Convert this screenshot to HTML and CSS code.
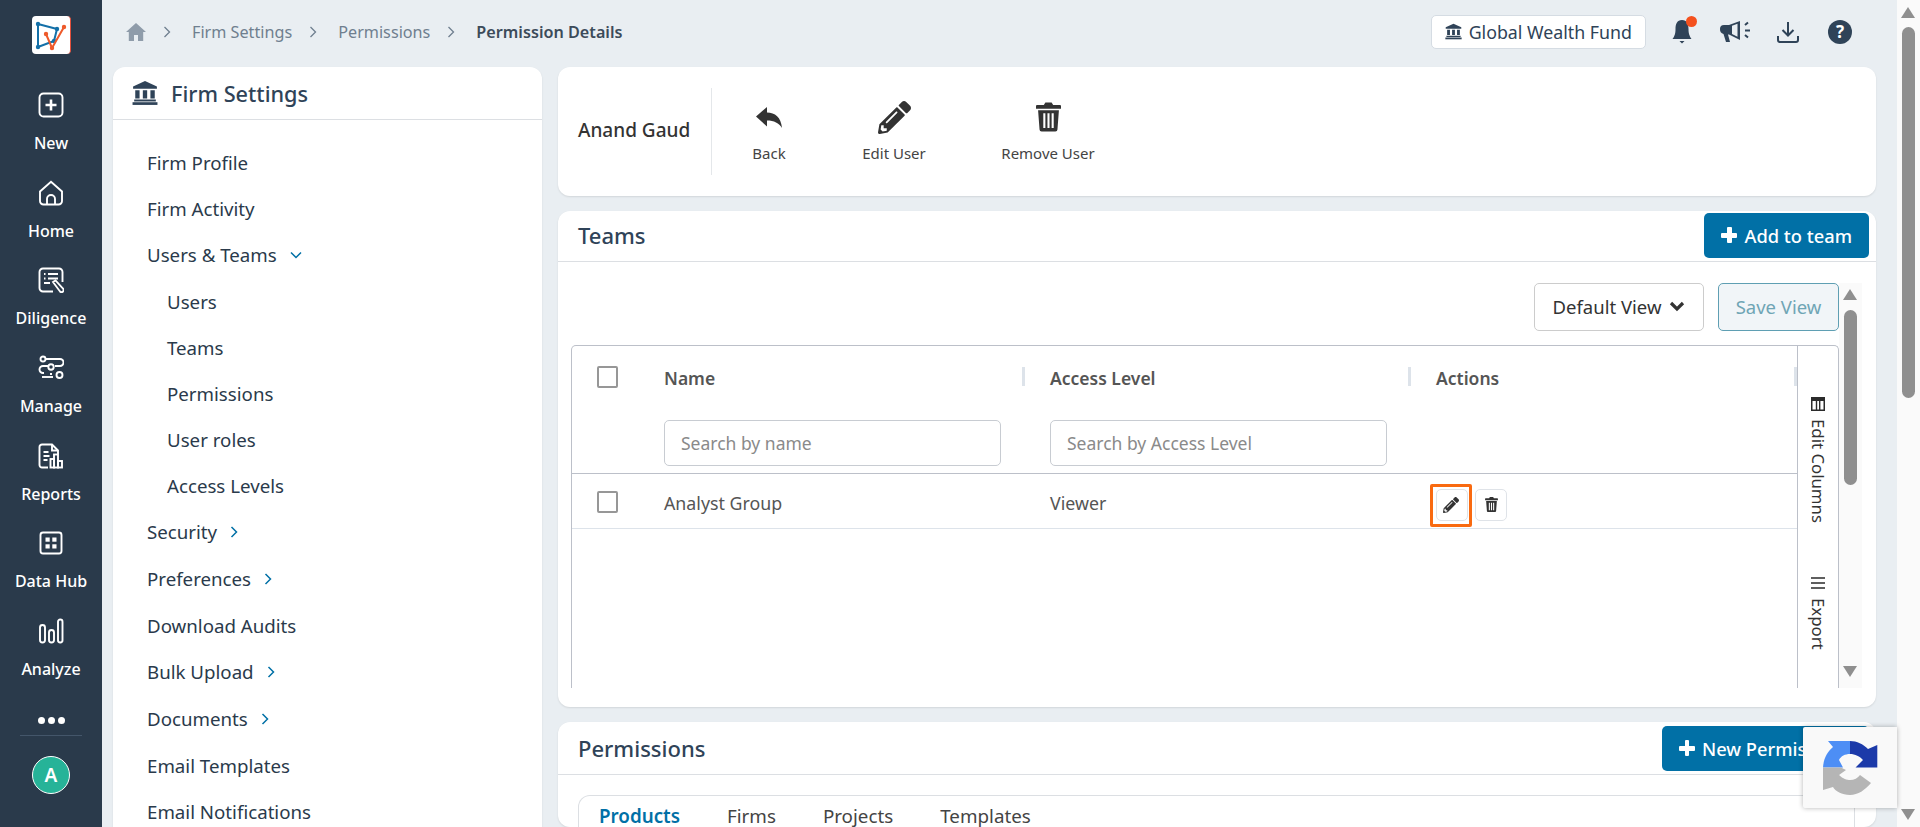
FILE: index.html
```html
<!DOCTYPE html>
<html lang="en">
<head>
    <meta charset="UTF-8">
    <meta name="viewport" content="width=device-width, initial-scale=1.0">
    <title>Permission Details</title>
    <link rel="stylesheet" href="styles.css">
</head>
<body>

    <!-- Left app rail -->
    <aside class="rail">
        <div class="logo">
            <svg viewBox="0 0 38 38" width="38" height="38">
                <path d="M6 8 L25 13 L22 25 L6 31 Z" fill="none" stroke="#1470a8" stroke-width="2"/>
                <circle cx="6" cy="8" r="2.2" fill="#1470a8"/><circle cx="25" cy="13" r="2.2" fill="#1470a8"/>
                <circle cx="22" cy="25" r="2.2" fill="#1470a8"/><circle cx="6" cy="31" r="2.2" fill="#1470a8"/>
                <path d="M14 18 L20 32 L32 11" fill="none" stroke="#ee5a2b" stroke-width="2"/>
                <circle cx="14" cy="18" r="2.2" fill="#ee5a2b"/><circle cx="20" cy="32" r="2.2" fill="#ee5a2b"/><circle cx="32" cy="11" r="2.2" fill="#ee5a2b"/>
            </svg>
        </div>
        <nav class="rail-nav">
            <a class="rail-item">
                <svg viewBox="0 0 26 26" class="rail-icon"><rect x="1.5" y="1.5" width="23" height="23" rx="4"/><path d="M13 7.5v11M7.5 13h11" stroke-width="2.6"/></svg>
                <span>New</span>
            </a>
            <a class="rail-item">
                <svg viewBox="0 0 26 26" class="rail-icon"><path d="M2 11.5 L13 1.8 L24 11.5 V21 a3.5 3.5 0 0 1 -3.5 3.5 H5.5 A3.5 3.5 0 0 1 2 21 Z"/><path d="M9 24.5 V19 a4 4 0 0 1 8 0 V24.5"/></svg>
                <span>Home</span>
            </a>
            <a class="rail-item">
                <svg viewBox="0 0 26 26" class="rail-icon"><path d="M15 24.5 H5 a3.5 3.5 0 0 1 -3.5 -3.5 V5 A3.5 3.5 0 0 1 5 1.5 H21 A3.5 3.5 0 0 1 24.5 5 V15"/><path d="M6 7h1.5M10 7h10M6 11.5h1.5M10 11.5h10M6 16h6"/><path d="M15 15 l2.500 -1.500 l7.500 8 a2 2 0 0 1 -3 3 z" stroke-width="1.800"/></svg>
                <span>Diligence</span>
            </a>
            <a class="rail-item">
                <svg viewBox="0 0 26 26" class="rail-icon"><circle cx="5" cy="4" r="2.500"/><path d="M8 4h14a2.500 2.500 0 0 1 0 7h-5"/><circle cx="13" cy="12" r="2.700"/><path d="M10 11H5a3.500 3.500 0 0 0 0 7h1M12 19h2"/><circle cx="21.500" cy="20" r="3"/><path d="M4 22h11"/></svg>
                <span>Manage</span>
            </a>
            <a class="rail-item">
                <svg viewBox="0 0 26 26" class="rail-icon"><path d="M10 24.500H4a2.500 2.500 0 0 1 -2.500 -2.500V4A2.500 2.500 0 0 1 4 1.500H14L20 7.500V11"/><path d="M14 1.500V7.500H20"/><path d="M5.500 9h5M5.500 13h6M5.500 17h4"/><rect x="12.500" y="16" width="3.500" height="8.500"/><rect x="16" y="11.500" width="4" height="13"/><rect x="20" y="18" width="4" height="6.500"/></svg>
                <span>Reports</span>
            </a>
            <a class="rail-item">
                <svg viewBox="0 0 26 26" class="rail-icon"><rect x="2.500" y="2.500" width="21" height="21" rx="2.500"/><g class="rail-fill"><rect x="7.500" y="7.500" width="4.200" height="4.200"/><rect x="14.300" y="7.500" width="4.200" height="4.200"/><rect x="7.500" y="14.300" width="4.200" height="4.200"/><rect x="14.300" y="14.300" width="4.200" height="4.200"/></g></svg>
                <span>Data Hub</span>
            </a>
            <a class="rail-item">
                <svg viewBox="0 0 26 26" class="rail-icon"><rect x="2" y="7" width="5" height="17.500" rx="2.500"/><rect x="11" y="12" width="5" height="12.500" rx="2.500"/><rect x="20" y="1.500" width="4.500" height="23" rx="2.200"/></svg>
                <span>Analyze</span>
            </a>
        </nav>
        <div class="rail-more"><i></i><i></i><i></i></div>
        <div class="rail-line"></div>
        <div class="avatar">A</div>
    </aside>

    <main class="main">

        <!-- Breadcrumbs and top tools -->
        <header class="topbar">
            <div class="crumbs">
                <svg class="crumb-home" viewBox="0 0 20 18" width="20" height="18"><path d="M10 0 L20 9 L17.200 9 V18 H12 V12 H8 V18 H2.800 V9 H0 Z" fill="#8f9caa"/></svg>
                <svg class="crumb-sep" viewBox="0 0 8 12" width="8" height="12"><path d="M1.500 1 L6.500 6 L1.500 11" fill="none" stroke="#6f7f8f" stroke-width="1.300"/></svg>
                <span>Firm Settings</span>
                <svg class="crumb-sep" viewBox="0 0 8 12" width="8" height="12"><path d="M1.500 1 L6.500 6 L1.500 11" fill="none" stroke="#6f7f8f" stroke-width="1.300"/></svg>
                <span>Permissions</span>
                <svg class="crumb-sep" viewBox="0 0 8 12" width="8" height="12"><path d="M1.500 1 L6.500 6 L1.500 11" fill="none" stroke="#6f7f8f" stroke-width="1.300"/></svg>
                <strong>Permission Details</strong>
            </div>
            <div class="tools">
                <div class="firm-pill">
                    <svg viewBox="0 0 24 24" width="17" height="17"><use href="#bank"/></svg>
                    <span>Global Wealth Fund</span>
                </div>
                <div class="tool tool-bell">
                    <svg viewBox="0 0 20 26" width="20" height="26"><path d="M10 1 C5 1 3.500 5 3.500 10 C3.500 15 2.500 17 0.500 20 H19.500 C17.500 17 16.500 15 16.500 10 C16.500 5 15 1 10 1 Z M7.500 22 H12.500 L10 24.500 Z" fill="#2f4358"/></svg>
                    <i class="bell-dot"></i>
                </div>
                <svg class="tool tool-horn" viewBox="0 0 33 24" width="33" height="24"><path d="M1 9 a4 4 0 0 1 4 -4 H10 L21 1 V20 L10 14.500 H9 L11 22 H7 L4.500 14 A5 5 0 0 1 1 9 Z" fill="#2f4358"/><path d="M13 5.800 L18.500 3.800 V16.800 L13 14 Z" fill="#e9eef2"/><path d="M26 5 l3 -2.500 M26 10.500 h5 M26 15 l3 2.500" stroke="#2f4358" stroke-width="2" fill="none"/></svg>
                <svg class="tool tool-down" viewBox="0 0 22 22" width="22" height="22"><path d="M11 1 V14 M5.500 9 L11 14.500 L16.500 9 M1 15 V19 a2 2 0 0 0 2 2 H19 a2 2 0 0 0 2 -2 V15" fill="none" stroke="#2f4358" stroke-width="2"/></svg>
                <div class="tool-help">?</div>
            </div>
        </header>

        <div class="columns">

            <!-- Settings menu -->
            <section class="card side-card">
                <div class="side-head">
                    <svg viewBox="0 0 24 24" width="26" height="26"><use href="#bank"/></svg>
                    <h2>Firm Settings</h2>
                </div>
                <ul class="side-list">
                    <li>Firm Profile</li>
                    <li>Firm Activity</li>
                    <li class="has-arrow">Users &amp; Teams <svg viewBox="0 0 12 8" width="12" height="8"><path d="M1 1.500 L6 6.500 L11 1.500" fill="none" stroke="#0170a6" stroke-width="1.500"/></svg></li>
                    <li class="sub">Users</li>
                    <li class="sub">Teams</li>
                    <li class="sub">Permissions</li>
                    <li class="sub">User roles</li>
                    <li class="sub">Access Levels</li>
                    <li class="has-arrow">Security <svg viewBox="0 0 8 12" width="8" height="12"><path d="M1.500 1 L6.500 6 L1.500 11" fill="none" stroke="#0170a6" stroke-width="1.500"/></svg></li>
                    <li class="has-arrow">Preferences <svg viewBox="0 0 8 12" width="8" height="12"><path d="M1.500 1 L6.500 6 L1.500 11" fill="none" stroke="#0170a6" stroke-width="1.500"/></svg></li>
                    <li>Download Audits</li>
                    <li class="has-arrow">Bulk Upload <svg viewBox="0 0 8 12" width="8" height="12"><path d="M1.500 1 L6.500 6 L1.500 11" fill="none" stroke="#0170a6" stroke-width="1.500"/></svg></li>
                    <li class="has-arrow">Documents <svg viewBox="0 0 8 12" width="8" height="12"><path d="M1.500 1 L6.500 6 L1.500 11" fill="none" stroke="#0170a6" stroke-width="1.500"/></svg></li>
                    <li>Email Templates</li>
                    <li>Email Notifications</li>
                </ul>
            </section>

            <div class="content">

                <!-- User summary -->
                <section class="card user-card">
                    <div class="user-name">Anand Gaud</div>
                    <div class="user-actions">
                        <a class="user-action action-back">
                            <span class="action-icon"><svg viewBox="0 0 26 21" width="26" height="21"><path fill="#333" d="M0 9.500 L11 0 V5.500 C19 5.500 25 10 26 21 C23 16 18 13.500 11 13.500 V19.500 Z"/></svg></span>
                            <span>Back</span>
                        </a>
                        <a class="user-action action-edit">
                            <span class="action-icon"><svg viewBox="0 0 512 512" width="33" height="33"><use href="#pencil"/></svg></span>
                            <span>Edit User</span>
                        </a>
                        <a class="user-action action-remove">
                            <span class="action-icon"><svg viewBox="0 0 24 28" width="25" height="30"><use href="#trash"/></svg></span>
                            <span>Remove User</span>
                        </a>
                    </div>
                </section>

                <!-- Teams -->
                <section class="card teams-card">
                    <div class="card-head">
                        <h3>Teams</h3>
                        <button class="btn-primary"><span class="plus"></span>Add to team</button>
                    </div>
                    <div class="teams-body">
                        <div class="teams-main">
                            <div class="view-bar">
                                <button class="btn-view">Default View <svg viewBox="0 0 16 11" width="16" height="11"><path d="M2 2 L8 8 L14 2" fill="none" stroke="#333" stroke-width="3.200"/></svg></button>
                                <button class="btn-save">Save View</button>
                            </div>
                            <div class="grid-box">
                                <div class="grid-table">
                                    <div class="grid-head">
                                        <div class="cell-check"><i class="check"></i></div>
                                        <div class="col-title">Name<i class="col-sep"></i></div>
                                        <div class="col-title">Access Level<i class="col-sep"></i></div>
                                        <div class="col-title">Actions<i class="col-sep"></i></div>
                                    </div>
                                    <div class="grid-filter">
                                        <div></div>
                                        <input class="filter-input" placeholder="Search by name">
                                        <input class="filter-input" placeholder="Search by Access Level">
                                        <div></div>
                                    </div>
                                    <div class="grid-row">
                                        <div class="cell-check"><i class="check"></i></div>
                                        <div class="row-text">Analyst Group</div>
                                        <div class="row-text">Viewer</div>
                                        <div class="row-actions">
                                            <button class="icon-btn icon-btn-marked"><svg viewBox="0 0 512 512" width="16" height="16"><use href="#pencil"/></svg></button>
                                            <button class="icon-btn"><svg viewBox="0 0 24 28" width="13" height="15"><use href="#trash"/></svg></button>
                                        </div>
                                    </div>
                                </div>
                                <div class="grid-side">
                                    <div class="side-tab tab-columns">
                                        <svg viewBox="0 0 14 14" width="14" height="14"><path d="M0 0H14V14H0Z M1.500 4V12.500H4.800V4Z M6.200 4V12.500H8V4Z M9.400 4V12.500H12.500V4Z" fill="#2b2b2b" fill-rule="evenodd"/></svg>
                                        <span>Edit Columns</span>
                                    </div>
                                    <div class="side-tab tab-export">
                                        <svg viewBox="0 0 14 14" width="14" height="14"><path d="M0 2H14M0 7H14M0 12H14" stroke="#2b2b2b" stroke-width="1.500"/></svg>
                                        <span>Export</span>
                                    </div>
                                </div>
                            </div>
                        </div>
                        <div class="inner-scroll">
                            <i class="arrow-up"></i>
                            <i class="inner-thumb"></i>
                            <i class="arrow-down"></i>
                        </div>
                    </div>
                </section>

                <!-- Permissions -->
                <section class="card perms-card">
                    <div class="card-head">
                        <h3>Permissions</h3>
                        <button class="btn-primary"><span class="plus"></span>New Permission</button>
                    </div>
                    <div class="perms-body">
                        <div class="tabs">
                            <span class="tab tab-active">Products</span>
                            <span class="tab">Firms</span>
                            <span class="tab">Projects</span>
                            <span class="tab">Templates</span>
                        </div>
                    </div>
                </section>
            </div>
        </div>
    </main>

    <!-- Page scrollbar -->
    <div class="page-scroll">
        <i class="arrow-up"></i>
        <i class="page-thumb"></i>
        <i class="arrow-down"></i>
    </div>

    <!-- reCAPTCHA badge floats over the page -->
    <div class="captcha">
        <svg viewBox="0 0 55 55" width="55" height="55">
            <path d="M0 27.500 C0.500 19 4 12 10 7 L5 1 H27 V14 C22 14 18 16 16 20 L20 27.500 Z" fill="#4d8ef5"/>
            <path d="M27 1 C34 1 40 4 45 9 L54.300 5 V27.500 H32.500 L40 20 C37 16.500 32 14 27 14 Z" fill="#1c3aa9"/>
            <path d="M0 27.500 H18 L23 30 L16 35 C20 39 24 40 27 40 C31 40 35 38 37 35 L48 43 C42 50 35 55 27 55 C19 55 12 51 10 47 L0 50 Z" fill="#b5b5b5"/>
        </svg>
    </div>

    <!-- Shared icons -->
    <svg class="icon-defs" width="0" height="0">
        <defs>
            <g id="bank" fill="#2f4358">
                <path d="M12 1 L23 6 V8 H1 V6 Z"/>
                <path d="M3 9.500H7V17H3Z M10 9.500H14V17H10Z M17 9.500H21V17H17Z" fill-rule="evenodd"/>
                <rect x="2" y="18" width="20" height="1.800"/>
                <rect x="0.500" y="20.500" width="23" height="2.500"/>
            </g>
            <path id="pencil" fill="#333" d="M497.900 142.100l-46.100 46.100c-4.700 4.700-12.300 4.700-17 0l-111-111c-4.700-4.700-4.700-12.300 0-17l46.100-46.100c18.700-18.700 49.100-18.700 67.900 0l60.100 60.100c18.800 18.700 18.800 49.100 0 67.900zM284.200 99.800L21.600 362.400.4 483.900c-2.900 16.400 11.400 30.600 27.800 27.800l121.500-21.300 262.600-262.600c4.700-4.700 4.700-12.300 0-17l-111-111c-4.800-4.700-12.400-4.700-17.100 0zM124.100 339.900c-5.500-5.500-5.500-14.300 0-19.800l154-154c5.500-5.500 14.300-5.500 19.800 0s5.500 14.300 0 19.800l-154 154c-5.500 5.500-14.300 5.500-19.800 0zM88 424h48v36.300l-64.500 11.300-31.100-31.100L51.700 376H88v48z"/>
            <path id="trash" fill="#333" fill-rule="evenodd" d="M9 0H15L16.500 2.500H23a1 1 0 0 1 1 1V6H0V3.500a1 1 0 0 1 1-1H7.500Z M2 7.500H22L20.600 26a2 2 0 0 1-2 2H5.400a2 2 0 0 1-2-2Z M7 10.500V24.500H9V10.500Z M11 10.500V24.500H13V10.500Z M15 10.500V24.500H17V10.500Z"/>
        </defs>
    </svg>

</body>
</html>
```

FILE: styles.css
```css
/* Base */
* {
    box-sizing: border-box;
}

html, body {
    height: 827px;
    margin: 0;
    overflow: hidden;
}

body {
    display: flex;
    font-family: "Noto Sans", Arial, sans-serif;
    font-size: 16px;
    color: #333;
    background-color: #e9eef2;
}

button, input {
    font-family: inherit;
}

h2, h3 {
    margin: 0;
}

.icon-defs {
    position: absolute;
}

/* App rail */
.rail {
    flex: 0 0 102px;
    display: flex;
    flex-direction: column;
    align-items: center;
    padding-top: 16px;
    background-color: #2a3a4b;
}

.logo {
    width: 39px;
    height: 38px;
    margin-bottom: 38px;
    background-color: #fff;
    border-radius: 4px;
    border-right: 1px solid #e2503c;
}

.rail-nav {
    display: flex;
    flex-direction: column;
    gap: 26.7px;
}

.rail-item {
    display: flex;
    flex-direction: column;
    align-items: center;
    gap: 15px;
    color: #fff;
    font-size: 16px;
    font-weight: 500;
    line-height: 20px;
}

.rail-icon {
    width: 26px;
    height: 26px;
    fill: none;
    stroke: #fff;
    stroke-width: 1.900;
}

.rail-fill rect {
    fill: #fff;
    stroke: none;
}

.rail-more {
    display: flex;
    gap: 3px;
    margin-top: 38px;
}

.rail-more i {
    width: 7px;
    height: 7px;
    border-radius: 50%;
    background-color: #fff;
}

.rail-line {
    width: 62px;
    height: 1px;
    margin-top: 11px;
    background-color: #44566a;
}

.avatar {
    width: 38px;
    height: 38px;
    margin-top: 20px;
    border: 1px solid #fff;
    border-radius: 50%;
    background-color: #26b398;
    color: #fff;
    font-size: 19px;
    font-weight: 600;
    line-height: 36px;
    text-align: center;
}

/* Main column */
.main {
    flex: 1;
    min-width: 0;
    height: 827px;
    overflow: hidden;
    padding: 0 21px 0 11px;
}

.topbar {
    display: flex;
    align-items: center;
    justify-content: space-between;
    height: 67px;
    padding-bottom: 4px;
}

.crumbs {
    display: flex;
    align-items: center;
    padding-left: 13px;
    font-size: 16.200px;
    color: #6f7f8f;
}

.crumbs strong {
    font-weight: 600;
    color: #3c4b5a;
}

.crumb-sep {
    margin: 0 21px 0 17px;
}

.tools {
    display: flex;
    align-items: center;
    padding-right: 24px;
}

.firm-pill {
    display: flex;
    align-items: center;
    gap: 7px;
    height: 34px;
    padding: 0 13px;
    background-color: #fff;
    border: 1px solid #d5dce3;
    border-radius: 5px;
    font-size: 17.800px;
    color: #2f4358;
}

.tool-bell {
    position: relative;
    height: 26px;
    margin-left: 26px;
}

.bell-dot {
    position: absolute;
    top: -3px;
    right: -5px;
    width: 11px;
    height: 11px;
    border-radius: 50%;
    background-color: #f4511e;
}

.tool-horn {
    margin-left: 27px;
}

.tool-down {
    margin-left: 25px;
}

.tool-help {
    width: 24px;
    height: 24px;
    margin-left: 29px;
    border-radius: 50%;
    background-color: #2f4358;
    color: #fff;
    font-size: 17px;
    font-weight: 700;
    line-height: 24px;
    text-align: center;
}

.columns {
    display: flex;
    gap: 16px;
    align-items: flex-start;
}

.card {
    background-color: #fff;
    border-radius: 12px;
    box-shadow: 0 1px 2px rgba(0, 0, 0, 0.1);
}

/* Settings menu */
.side-card {
    flex: 0 0 429px;
    height: 780px;
}

.side-head {
    display: flex;
    align-items: center;
    gap: 13px;
    height: 53px;
    padding-left: 19px;
    border-bottom: 1px solid #dcdfe3;
}

.side-head h2 {
    font-size: 21.700px;
    font-weight: 500;
    color: #2f4358;
}

.side-list {
    margin: 0;
    padding: 19px 0 0 34px;
    list-style: none;
    font-size: 18.700px;
    color: #2a3a4b;
}

.side-list li {
    display: flex;
    align-items: center;
    gap: 9px;
    height: 46px;
}

.side-list .has-arrow {
    gap: 13px;
    height: 47px;
}

.side-list .sub {
    padding-left: 20px;
}

/* Right column */
.content {
    flex: 1;
    min-width: 0;
    display: flex;
    flex-direction: column;
    gap: 15px;
}

.user-card {
    display: flex;
    align-items: center;
    height: 129px;
    padding-left: 20px;
}

.user-name {
    width: 134px;
    height: 87px;
    border-right: 1px solid #e4e7ea;
    font-size: 19px;
    font-weight: 500;
    line-height: 85px;
}

.user-actions {
    display: flex;
}

.user-action {
    display: flex;
    flex-direction: column;
    align-items: center;
    gap: 10px;
    font-size: 15px;
    line-height: 19px;
    color: #444;
}

.action-icon {
    display: flex;
    align-items: center;
    height: 33px;
}

.action-back {
    width: 114px;
}

.action-edit {
    width: 136px;
}

.action-remove {
    width: 172px;
}

.card-head {
    display: flex;
    align-items: center;
    justify-content: space-between;
    height: 51px;
    padding: 0 7px 0 20px;
    border-bottom: 1px solid #dcdfe3;
}

.card-head h3 {
    font-size: 22px;
    font-weight: 500;
    color: #2f4358;
}

.btn-primary {
    display: flex;
    align-items: center;
    gap: 7px;
    height: 45px;
    padding: 0 17px;
    background-color: #0170a6;
    border: none;
    border-radius: 5px;
    color: #fff;
    font-size: 18.300px;
    font-weight: 500;
}

.plus {
    position: relative;
    width: 16px;
    height: 16px;
}

.plus::before, .plus::after {
    content: "";
    position: absolute;
    background-color: #fff;
    border-radius: 1px;
}

.plus::before {
    top: 6px;
    left: 0;
    width: 16px;
    height: 4.500px;
}

.plus::after {
    top: 0;
    left: 5.800px;
    width: 4.500px;
    height: 16px;
}

/* Teams */
.teams-card {
    height: 496px;
    overflow: hidden;
}

.teams-card .card-head {
    padding-bottom: 2px;
}

.teams-body {
    display: flex;
    padding: 21px 14px 0 13px;
}

.teams-main {
    flex: 1;
    min-width: 0;
}

.view-bar {
    display: flex;
    justify-content: flex-end;
    gap: 14px;
    height: 48px;
    margin-bottom: 14px;
}

.btn-view {
    display: flex;
    align-items: center;
    justify-content: center;
    gap: 8px;
    width: 170px;
    padding-bottom: 2px;
    background-color: #fff;
    border: 1px solid #ccc;
    border-radius: 5px;
    color: #333;
    font-size: 18.500px;
}

.btn-save {
    width: 121px;
    padding-bottom: 3px;
    background-color: #f1f5f8;
    border: 1px solid #5f9fb3;
    border-radius: 5px;
    color: #6fa5b5;
    font-size: 18.500px;
}

.grid-box {
    display: flex;
    height: 343px;
    border: 1px solid #bcc0c9;
    border-bottom: none;
    border-radius: 5px 5px 0 0;
}

.grid-table {
    flex: 1;
    min-width: 0;
}

.grid-head, .grid-filter, .grid-row {
    display: grid;
    grid-template-columns: 92px 386px 386px 1fr;
}

.grid-head {
    align-items: center;
    height: 62px;
}

.cell-check {
    padding-left: 25px;
    display: flex;
}

.check {
    width: 21px;
    height: 22px;
    border: 2.500px solid #979797;
    border-radius: 2px;
}

.col-title {
    position: relative;
    padding-top: 2px;
    font-size: 17.500px;
    font-weight: 600;
    color: #555;
}

.col-sep {
    position: absolute;
    top: 3px;
    right: 25px;
    width: 3px;
    height: 19px;
    background-color: #dde3ea;
}

.grid-head .col-title:last-child .col-sep {
    right: 0;
}

.grid-filter {
    height: 66px;
    padding-top: 12px;
    border-bottom: 1px solid #bcc0c9;
}

.filter-input {
    width: 337px;
    height: 46px;
    padding: 0 16px;
    background-color: #fff;
    border: 1px solid #c8ccd2;
    border-radius: 5px;
    font-size: 17.500px;
}

.filter-input::placeholder {
    color: #8a8a8a;
}

.grid-row {
    align-items: center;
    height: 55px;
    padding-top: 1px;
    border-bottom: 1px solid #dde3ea;
    font-size: 17.800px;
    color: #555;
}

.row-text {
    padding-top: 3px;
}

.row-actions {
    display: flex;
    gap: 7px;
    margin-top: 6px;
}

.icon-btn {
    display: flex;
    align-items: center;
    justify-content: center;
    width: 32px;
    height: 32px;
    padding: 0;
    background-color: #fff;
    border: 1px solid #dfe3e8;
    border-radius: 5px;
}

/* orange marker drawn over the edit button in the screenshot */
.icon-btn-marked {
    position: relative;
}

.icon-btn-marked svg {
    margin-right: 3px;
}

.icon-btn-marked::after {
    content: "";
    position: absolute;
    top: -6px;
    left: -7px;
    width: 36px;
    height: 37px;
    border: 3px solid #f96a10;
    border-radius: 2px;
}

.grid-side {
    flex: 0 0 41px;
    display: flex;
    flex-direction: column;
    align-items: center;
    padding-top: 51px;
    border-left: 1px solid #bcc0c9;
}

.side-tab {
    display: flex;
    flex-direction: column;
    align-items: center;
    gap: 8px;
}

.side-tab span {
    writing-mode: vertical-rl;
    font-size: 16.800px;
    line-height: 16px;
    color: #333;
}

.tab-export {
    margin-top: 53px;
}

.inner-scroll {
    position: relative;
    flex: 0 0 23px;
    height: 405px;
    background-color: #fafafa;
}

.inner-scroll .arrow-up {
    position: absolute;
    top: 6px;
    left: 4px;
}

.inner-thumb {
    position: absolute;
    top: 27px;
    left: 5px;
    width: 13px;
    height: 175px;
    border-radius: 7px;
    background-color: #8f8f8f;
}

.inner-scroll .arrow-down {
    position: absolute;
    bottom: 11px;
    left: 4px;
}

.arrow-up, .arrow-down {
    width: 0;
    height: 0;
    border-left: 7.500px solid transparent;
    border-right: 7.500px solid transparent;
}

.arrow-up {
    border-bottom: 11px solid #8f8f8f;
}

.arrow-down {
    border-top: 11px solid #8f8f8f;
}

/* Permissions */
.perms-card {
    height: 105px;
    overflow: hidden;
}

.perms-card .card-head {
    height: 53px;
}

.perms-card .btn-primary {
    width: 207px;
    white-space: nowrap;
}

.perms-body {
    padding: 20px 21px 0 20px;
}

.tabs {
    display: flex;
    height: 32px;
    padding: 9px 0 0 20px;
    border: 1px solid #dcdfe3;
    border-bottom: none;
    border-radius: 12px 12px 0 0;
    font-size: 18.800px;
    line-height: 22px;
    color: #444;
}

.tab {
    margin-right: 47px;
}

.tab-active {
    font-weight: 600;
    color: #0170a6;
}

/* Page scrollbar */
.page-scroll {
    position: relative;
    flex: 0 0 23px;
    background-color: #fafafa;
}

.page-scroll .arrow-up {
    position: absolute;
    top: 7px;
    left: 4px;
}

.page-thumb {
    position: absolute;
    top: 27px;
    left: 5px;
    width: 13px;
    height: 371px;
    border-radius: 7px;
    background-color: #8f8f8f;
}

.page-scroll .arrow-down {
    position: absolute;
    bottom: 7px;
    left: 4px;
}

/* reCAPTCHA badge */
.captcha {
    position: absolute;
    top: 727px;
    left: 1803px;
    width: 94px;
    height: 81px;
    padding: 13px 0 0 20px;
    background-color: #f9f9f9;
    border-radius: 2px 0 0 2px;
    box-shadow: 0 0 5px rgba(0, 0, 0, 0.3);
}
```
